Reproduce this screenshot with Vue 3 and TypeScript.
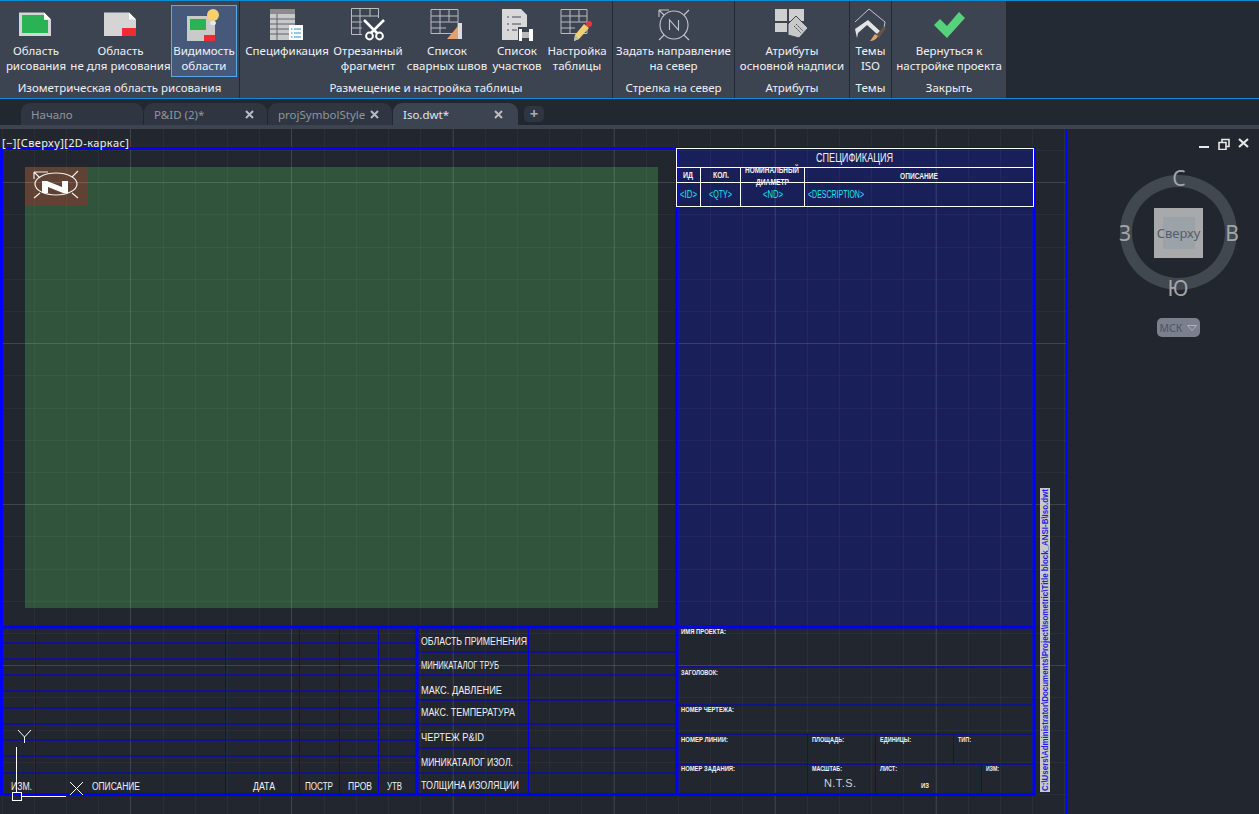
<script setup lang="ts">
interface Tool { label: string[]; icon: string; w: number; active?: boolean }
interface Panel { title: string; w: number; tools: Tool[] }
const panels: Panel[] = [
  { title: 'Изометрическая область рисования', w: 239, tools: [
    { label: ['Область', 'рисования'], icon: 'draw', w: 68 },
    { label: ['Область', 'не для рисования'], icon: 'nodraw', w: 101 },
    { label: ['Видимость', 'области'], icon: 'vis', w: 66, active: true },
  ] },
  { title: 'Размещение и настройка таблицы', w: 372, tools: [
    { label: ['Спецификация'], icon: 'bom', w: 90 },
    { label: ['Отрезанный', 'фрагмент'], icon: 'cut', w: 72 },
    { label: ['Список', 'сварных швов'], icon: 'weld', w: 86 },
    { label: ['Список', 'участков'], icon: 'spool', w: 54 },
    { label: ['Настройка', 'таблицы'], icon: 'tset', w: 66 },
  ] },
  { title: 'Стрелка на север', w: 121, tools: [{ label: ['Задать направление', 'на север'], icon: 'north', w: 121 }] },
  { title: 'Атрибуты', w: 114, tools: [{ label: ['Атрибуты', 'основной надписи'], icon: 'attr', w: 114 }] },
  { title: 'Темы', w: 41, tools: [{ label: ['Темы', 'ISO'], icon: 'theme', w: 41 }] },
  { title: 'Закрыть', w: 114, tools: [{ label: ['Вернуться к', 'настройке проекта'], icon: 'close', w: 114 }] },
]
const tabs = [
  { name: 'Начало', x: false, w: 122 },
  { name: 'P&ID (2)*', x: true, w: 123 },
  { name: 'projSymbolStyle', x: true, w: 124 },
  { name: 'Iso.dwt*', x: true, w: 125, active: true },
]
const majorV = [130, 291, 453, 614, 775, 936]
const majorH = [182, 343, 504, 665]
const minorV = Array.from({ length: 34 }, (_, i) => Math.round(1.5 + i * 32.2))
const minorH = Array.from({ length: 22 }, (_, i) => Math.round(150 + i * 32.2))
const thin: number[][] = [
  [3, 643, 417, 643], [3, 659, 417, 659], [3, 675, 417, 675], [3, 691, 417, 691], [3, 708, 417, 708],
  [3, 724, 417, 724], [3, 740, 417, 740], [3, 756, 417, 756], [3, 773, 417, 773],
  [35.5, 628, 35.5, 794], [225.5, 628, 225.5, 794], [299.5, 628, 299.5, 794], [339.5, 628, 339.5, 794], [378.5, 628, 378.5, 794],
  [417, 652, 677, 652], [417, 675, 677, 675], [417, 700, 677, 700], [417, 724, 677, 724], [417, 748, 677, 748], [417, 773, 677, 773],
  [528.5, 628, 528.5, 794],
  [677, 667, 1033, 667], [677, 705, 1033, 705], [677, 734, 1033, 734], [677, 764, 1033, 764],
  [807.5, 734, 807.5, 794], [875.5, 734, 875.5, 794], [953.5, 734, 953.5, 764], [981.5, 764, 981.5, 794],
]
const thick: number[][] = [[0, 148.5, 1036, 148.5], [1.5, 148, 1.5, 796], [0, 627, 1036, 627], [0, 794.5, 1036, 794.5], [417, 627, 417, 795], [677, 149, 677, 795], [1034, 149, 1034, 796]]
const titles = [
  { t: 'ОБЛАСТЬ  ПРИМЕНЕНИЯ', x: 421, y: 645, l: 106 }, { t: 'МИНИКАТАЛОГ  ТРУБ', x: 421, y: 669, l: 78 },
  { t: 'МАКС.  ДАВЛЕНИЕ', x: 421, y: 694, l: 81 }, { t: 'МАКС.  ТЕМПЕРАТУРА', x: 421, y: 716, l: 94 },
  { t: 'ЧЕРТЕЖ  P&ID', x: 421, y: 741, l: 63 }, { t: 'МИНИКАТАЛОГ  ИЗОЛ.', x: 421, y: 766, l: 92 },
  { t: 'ТОЛЩИНА  ИЗОЛЯЦИИ', x: 421, y: 789, l: 98 }, { t: 'ИЗМ.', x: 11, y: 790, l: 21 },
  { t: 'ОПИСАНИЕ', x: 92, y: 790, l: 48 }, { t: 'ДАТА', x: 253, y: 790, l: 22 },
  { t: 'ПОСТР', x: 305, y: 790, l: 28 }, { t: 'ПРОВ', x: 348, y: 790, l: 24 }, { t: 'УТВ', x: 387, y: 790, l: 15 },
]
const small = [
  { t: 'ИМЯ ПРОЕКТА:', x: 681, y: 634, l: 45 }, { t: 'ЗАГОЛОВОК:', x: 681, y: 675, l: 37 },
  { t: 'НОМЕР ЧЕРТЕЖА:', x: 681, y: 712, l: 53 }, { t: 'НОМЕР ЛИНИИ:', x: 681, y: 742, l: 47 },
  { t: 'ПЛОЩАДЬ:', x: 812, y: 742, l: 32 }, { t: 'ЕДИНИЦЫ:', x: 880, y: 742, l: 31 }, { t: 'ТИП:', x: 958, y: 742, l: 13 },
  { t: 'НОМЕР ЗАДАНИЯ:', x: 681, y: 771, l: 54 }, { t: 'МАСШТАБ:', x: 812, y: 771, l: 30 },
  { t: 'ЛИСТ:', x: 880, y: 771, l: 17 }, { t: 'ИЗМ:', x: 986, y: 771, l: 13 }, { t: 'ИЗ', x: 921, y: 788, l: 8 },
]
</script>

<template>
  <div class="app">
    <header class="ribbon">
      <section v-for="p in panels" :key="p.title" class="panel" :style="{ width: p.w + 'px' }">
        <div class="tools">
          <button v-for="t in p.tools" :key="t.icon" class="tool" :class="{ active: t.active }" :style="{ width: t.w + 'px' }">
            <span class="ico">
              <svg v-if="t.icon === 'draw'" width="34" height="26" viewBox="0 0 34 26">
                <path d="M0 .5h25l7 7V24H0z" fill="#d5d5d5" /><path d="M25 .5l7 7h-7z" fill="#fff" /><path d="M3 3h22v5h4v13H3z" fill="#29b355" />
              </svg>
              <svg v-else-if="t.icon === 'nodraw'" width="34" height="26" viewBox="0 0 34 26">
                <path d="M0 .5h25l7 7V24H0z" fill="#d5d5d5" /><path d="M25 .5l7 7h-7z" fill="#fff" /><rect x="18" y="16" width="14" height="8" fill="#ee2d33" />
              </svg>
              <svg v-else-if="t.icon === 'vis'" width="34" height="32" viewBox="0 0 34 32">
                <rect x="0" y="7" width="28" height="25" fill="#c9cbcb" /><rect x="3" y="10" width="16" height="11" fill="#29b355" /><rect x="17" y="26" width="11" height="6" fill="#ee2d33" />
                <circle cx="26" cy="6" r="6" fill="#f6cf6e" /><rect x="23" y="12" width="6" height="4" rx="2" fill="#e8e8e8" />
              </svg>
              <svg v-else-if="t.icon === 'bom'" width="34" height="32" viewBox="0 0 34 32">
                <rect x="0" y="0" width="25" height="31" fill="#c9c9c9" /><rect x="0" y="0" width="25" height="5" fill="#8c8c8c" /><path d="M0 10h25M0 15h25M0 20h25M0 25h25M7 5v26" stroke="#5c6470" fill="none" />
                <rect x="19" y="16" width="14" height="15" fill="#fff" /><path d="M24 20h7M24 24h7M24 28h7" stroke="#2a8fd6" /><path d="M21 20h1.5M21 24h1.5M21 28h1.5" stroke="#2a8fd6" />
              </svg>
              <svg v-else-if="t.icon === 'cut'" width="34" height="33" viewBox="0 0 34 33" fill="none">
                <path d="M.5 .5h27v26H.5zM.5 8h27M.5 14h16M.5 20h12M9 .5v26M19 .5v8" stroke="#b9bcc0" />
                <rect x="11" y="10" width="23" height="23" fill="#3c4452" />
                <path d="M13 12l13 13M33 12L20 25" stroke="#fff" stroke-width="2.6" /><circle cx="18.500" cy="28" r="3.400" stroke="#fff" stroke-width="2" /><circle cx="28.500" cy="28" r="3.400" stroke="#fff" stroke-width="2" />
              </svg>
              <svg v-else-if="t.icon === 'weld'" width="34" height="32" viewBox="0 0 34 32" fill="none">
                <path d="M1 .5h27v24H1zM1 7h27M1 13h27M1 19h15M10 .5v24M19 .5v12" stroke="#b9bcc0" />
                <path d="M17 30L28 17v13z" fill="#e8a06c" /><rect x="28" y="14" width="4" height="16" fill="#dcdcdc" />
              </svg>
              <svg v-else-if="t.icon === 'spool'" width="34" height="32" viewBox="0 0 34 32">
                <path d="M2 0h19l6 6v25H2z" fill="#d8d8d8" /><path d="M7 8h2M12 8h9M7 15h2M12 15h9M7 21h2M12 21h5" stroke="#444c58" fill="none" />
                <rect x="18" y="18" width="16" height="14" fill="#3c4452" /><rect x="19" y="20" width="3" height="12" fill="#fff" /><rect x="22" y="23" width="7" height="6" fill="#bbb" /><rect x="29" y="20" width="4" height="12" fill="#fff" />
              </svg>
              <svg v-else-if="t.icon === 'tset'" width="34" height="32" viewBox="0 0 34 32" fill="none">
                <path d="M1 .5h26v24H1zM1 7h26M1 13h26M1 19h14M10 .5v24M19 .5v12" stroke="#b9bcc0" />
                <path d="M24 15l5 4-10 11-5 2 1-6z" fill="#f2cf72" /><path d="M14 32l1-6 4 4z" fill="#bbb" /><circle cx="29" cy="15" r="3" fill="#e6393d" />
              </svg>
              <svg v-else-if="t.icon === 'north'" width="34" height="32" viewBox="0 0 34 32" fill="none" stroke="#c4c7ca" stroke-width="1.1">
                <circle cx="17" cy="16" r="14" /><path d="M2 1h10M2 1v7M2 1l5 5M32 1l-5 5M2 31l5-5M32 31l-5-5" /><path d="M12.500 21V11l9 10V11" />
              </svg>
              <svg v-else-if="t.icon === 'attr'" width="34" height="32" viewBox="0 0 34 32">
                <path d="M0 0h12v12H0zM14 0h15v12H14zM0 14h12v9H0zM14 14h4v9h-4z" fill="#cfcfcf" />
                <path d="M13 15l8-8 12 12-9 10-11-3z" fill="#c8c8c8" stroke="#3c4452" /><path d="M19 17l7 7M21 15l7 7" stroke="#444c58" stroke-dasharray="2 1" />
              </svg>
              <svg v-else-if="t.icon === 'theme'" width="34" height="34" viewBox="0 0 34 34" fill="none">
                <path d="M1 14L15 1l16 13-1 6" stroke="#c4c7ca" /><path d="M3 30l-2-9L14 12l12 11-3 3-10-9-9 8z" fill="#e4e4e4" /><path d="M22 28l8-10 2 2-7 10z" fill="#6a5646" /><path d="M16 33c3 0 6-1 8-5l-3-2c-2 2-3 5-5 7z" fill="#d9a66c" />
              </svg>
              <svg v-else width="34" height="28" viewBox="0 0 34 28">
                <path d="M2 14l6-6 7 7L27 1l6 6-18 20z" fill="#57d27c" />
              </svg>
            </span>
            <span class="lbl"><span v-for="l in t.label" :key="l">{{ l }}</span></span>
          </button>
        </div>
        <div class="ptitle">{{ p.title }}</div>
      </section>
    </header>

    <nav class="tabbar">
      <div v-for="t in tabs" :key="t.name" class="tab" :class="{ on: t.active }" :style="{ width: t.w + 'px' }">
        <span class="tname">{{ t.name }}</span>
        <svg v-if="t.x" class="tx" width="9" height="9" viewBox="0 0 9 9"><path d="M1 1l7 7M8 1L1 8" stroke="#b8bcc2" stroke-width="2" /></svg>
      </div>
      <div class="plus">+</div>
    </nav>
    <div class="strip"></div>

    <main class="canvas">
      <svg class="draw" width="1259" height="685" viewBox="0 129 1259 685">
        <rect x="25" y="167" width="633" height="441" fill="#30553c" />
        <rect x="678" y="150" width="355" height="476" fill="#192059" />
        <rect x="25" y="167" width="63" height="39" fill="#5f4233" />

        <path v-for="x in minorV" :key="'v' + x" :d="`M${x + 0.5} 129V814`" stroke="#fff" stroke-opacity=".04" />
        <path v-for="y in minorH" :key="'h' + y" :d="`M0 ${y + 0.5}H1066`" stroke="#fff" stroke-opacity=".04" />
        <path v-for="x in majorV" :key="'gv' + x" :d="`M${x + 0.5} 129V814`" stroke="#fff" stroke-opacity=".1" />
        <path v-for="y in majorH" :key="'gh' + y" :d="`M0 ${y + 0.5}H1066`" stroke="#fff" stroke-opacity=".1" />

        <g fill="none" stroke="#f1eeea" stroke-width="1.2">
          <ellipse cx="56" cy="184" rx="21" ry="11" />
          <path d="M34 172h14M34 172v7M34 172l6 6M78 171l-6 6M34 198l6-5M78 198l-6-5" />
        </g>
        <path d="M42 193V181h5l15 6v-6h6v12h-5l-15-6v6z" fill="#fff" />

        <path d="M1066.5 129V814" stroke="#0000ff" stroke-width="1" />

        <path v-for="(l, i) in thin" :key="'t' + i" :d="`M${l[0]} ${l[1]}L${l[2]} ${l[3]}`" stroke="#0000e6" stroke-width="1" />
        <path v-for="(l, i) in thick" :key="'b' + i" :d="`M${l[0]} ${l[1]}L${l[2]} ${l[3]}`" stroke="#0000ff" stroke-width="3" />

        <text v-for="t in titles" :key="t.t" class="cad" :x="t.x" :y="t.y" :textLength="t.l" lengthAdjust="spacingAndGlyphs">{{ t.t }}</text>
        <text v-for="t in small" :key="t.t + t.x" class="cad s" :x="t.x" :y="t.y" :textLength="t.l" lengthAdjust="spacingAndGlyphs">{{ t.t }}</text>
        <text class="cad nts" x="824" y="787" textLength="32" lengthAdjust="spacing">N.T.S.</text>

        <g fill="none" stroke="#fff" stroke-width="1">
          <rect x="676.5" y="148.5" width="357" height="58" />
          <path d="M677 167.5H1033M677 182.5H1033M700.5 167V206M740.5 167V206M804.5 167V206" />
        </g>
        <text class="cad hd" x="816" y="162" textLength="77" lengthAdjust="spacingAndGlyphs">СПЕЦИФИКАЦИЯ</text>
        <text class="cad c" x="683" y="178" textLength="10" lengthAdjust="spacingAndGlyphs">ИД</text>
        <text class="cad c" x="713" y="178" textLength="16" lengthAdjust="spacingAndGlyphs">КОЛ.</text>
        <text class="cad c" x="745" y="173" textLength="54" lengthAdjust="spacingAndGlyphs">НОМИНАЛЬНЫЙ</text>
        <text class="cad c" x="756" y="185" textLength="33" lengthAdjust="spacingAndGlyphs">ДИАМЕТР</text>
        <text class="cad c" x="900" y="179" textLength="38" lengthAdjust="spacingAndGlyphs">ОПИСАНИЕ</text>
        <text class="cad cy" x="680" y="198" textLength="17" lengthAdjust="spacingAndGlyphs">&lt;ID&gt;</text>
        <text class="cad cy" x="709" y="198" textLength="23" lengthAdjust="spacingAndGlyphs">&lt;QTY&gt;</text>
        <text class="cad cy" x="763" y="198" textLength="20" lengthAdjust="spacingAndGlyphs">&lt;ND&gt;</text>
        <text class="cad cy" x="808" y="198" textLength="56" lengthAdjust="spacingAndGlyphs">&lt;DESCRIPTION&gt;</text>

        <rect x="1040" y="488" width="10" height="304" fill="#c9c9c9" />
        <text class="path" transform="translate(1048 791) rotate(-90)" textLength="302" lengthAdjust="spacingAndGlyphs">C:\Users\Administrator\Documents\Project\Isometric\Title block_ANSI-B\Iso.dwt</text>

        <g fill="none" stroke="#fff" stroke-width="1">
          <path d="M16.5 747V792M21 796.5H66" />
          <rect x="12.5" y="792.5" width="9" height="8" />
          <path d="M18 730l6.5 7 6.5-7M24.5 737v6M70 782l13 13M83 782L70 795" />
        </g>
      </svg>

      <div class="label">[−][Сверху][2D-каркас]</div>

      <div class="winctl">
        <svg width="58" height="12" viewBox="0 0 58 12" fill="none">
          <path d="M3 9h10" stroke="#e8e8e8" stroke-width="2" />
          <path d="M23 4.500h7v7h-7zM26 4V1.500h7v7h-3" stroke="#e8e8e8" stroke-width="1.6" />
          <path d="M43 1l9 8M52 1l-9 8" stroke="#e8e8e8" stroke-width="2.2" />
        </svg>
      </div>

      <div class="cube">
        <div class="ring"></div>
        <div class="face"><div class="inner"></div><span>Сверху</span></div>
        <span class="dir n">С</span><span class="dir s">Ю</span><span class="dir e">В</span><span class="dir w">З</span>
      </div>
      <div class="wcs">МСК<svg width="10" height="6" viewBox="0 0 10 6"><path d="M.5 .5h9L5 5.5z" fill="none" stroke="#aeb0bb" /></svg></div>
    </main>
  </div>
</template>

<style>
html, body { margin: 0; background: #22272f; overflow: hidden; }
</style>

<style scoped>
.app { width: 1259px; height: 814px; display: flex; flex-direction: column; background: #22272f; font-family: "Noto Sans", "Open Sans", sans-serif; overflow: hidden; }
.ribbon { height: 99px; box-sizing: border-box; flex: none; display: flex; gap: 1px; border-top: 1px solid #0b8ed2; border-bottom: 1px solid #0b8ed2; background: #242a33; }
.panel { background: #3c4452; display: flex; flex-direction: column; flex: none; }
.tools { flex: 1; display: flex; padding-top: 4px; justify-content: center; }
.tool { height: 72px; padding: 0; background: none; border: 1px solid transparent; color: #f0f2f4; font: inherit; display: flex; flex-direction: column; align-items: center; box-sizing: border-box; flex: none; }
.tool.active { background: #46597a; border-color: #55ade6; }
.ico { height: 37px; display: flex; align-items: center; justify-content: center; }
.lbl { display: flex; flex-direction: column; font-size: 11.500px; line-height: 15px; white-space: nowrap; }
.ptitle { height: 20px; font-size: 11.500px; line-height: 19px; text-align: center; color: #eef0f2; white-space: nowrap; }
.tabbar { height: 26px; box-sizing: border-box; flex: none; display: flex; align-items: flex-end; padding-left: 21px; gap: 1px; background: #222830; }
.tab { height: 22px; flex: none; background: #2f3541; border-radius: 9px 9px 0 0; display: flex; align-items: center; justify-content: space-between; padding: 0 13px 0 10px; box-sizing: border-box; color: #8f959e; font-size: 11.500px; }
.tab.on { background: #3c4452; color: #e4e6e9; padding-right: 15px; }
.plus { width: 20px; height: 16px; margin: 0 0 3px 5px; background: #2f3541; border-radius: 5px; color: #a8adb4; font-size: 15px; font-weight: 700; line-height: 15px; text-align: center; }
.strip { height: 4px; flex: none; background: #3c4452; }
.canvas { position: relative; flex: 1; overflow: hidden; }
.draw { position: absolute; left: 0; top: 0; display: block; }
.cad { font-family: "Liberation Sans", sans-serif; font-size: 10px; fill: #f2f2f2; }
.cad.s { font-size: 8px; font-weight: 700; }
.cad.nts { fill: #d0d2d6; font-size: 11px; }
.cad.hd { font-size: 12.500px; }
.cad.c { font-size: 9px; font-weight: 700; }
.cad.cy { font-size: 10px; fill: #0fe8f5; }
.path { font-family: "Liberation Sans", sans-serif; font-size: 9px; font-weight: 700; fill: #1e1ee0; }
.label { position: absolute; left: 2px; top: 7px; color: #f0f2f4; font-size: 11px; line-height: 14px; letter-spacing: .4px; }
.winctl { position: absolute; left: 1196px; top: 9px; line-height: 0; }
.cube { position: absolute; left: 1120px; top: 46px; width: 117px; height: 115px; }
.ring { position: absolute; inset: 0; border: 12px solid #414850; border-radius: 50%; box-sizing: border-box; }
.face { position: absolute; left: 34px; top: 33px; width: 49px; height: 50px; background: #a7a9ab; display: flex; align-items: center; justify-content: center; color: #555d68; font-size: 13px; }
.face span { position: relative; }
.inner { position: absolute; left: 9px; top: 9px; width: 32px; height: 32px; background: #9ba3a8; }
.dir { position: absolute; color: #a2a5a9; font-size: 21px; line-height: 24px; transform: translate(-50%, -50%); }
.n { left: 59px; top: 3px; }
.s { left: 58px; top: 113px; }
.e { left: 112px; top: 58px; }
.w { left: 5px; top: 58px; }
.wcs { position: absolute; left: 1157px; top: 189px; width: 43px; height: 19px; background: #7c7f8e; border-radius: 5px; color: #4d5565; font-size: 10.500px; display: flex; align-items: center; justify-content: center; gap: 5px; }
</style>
